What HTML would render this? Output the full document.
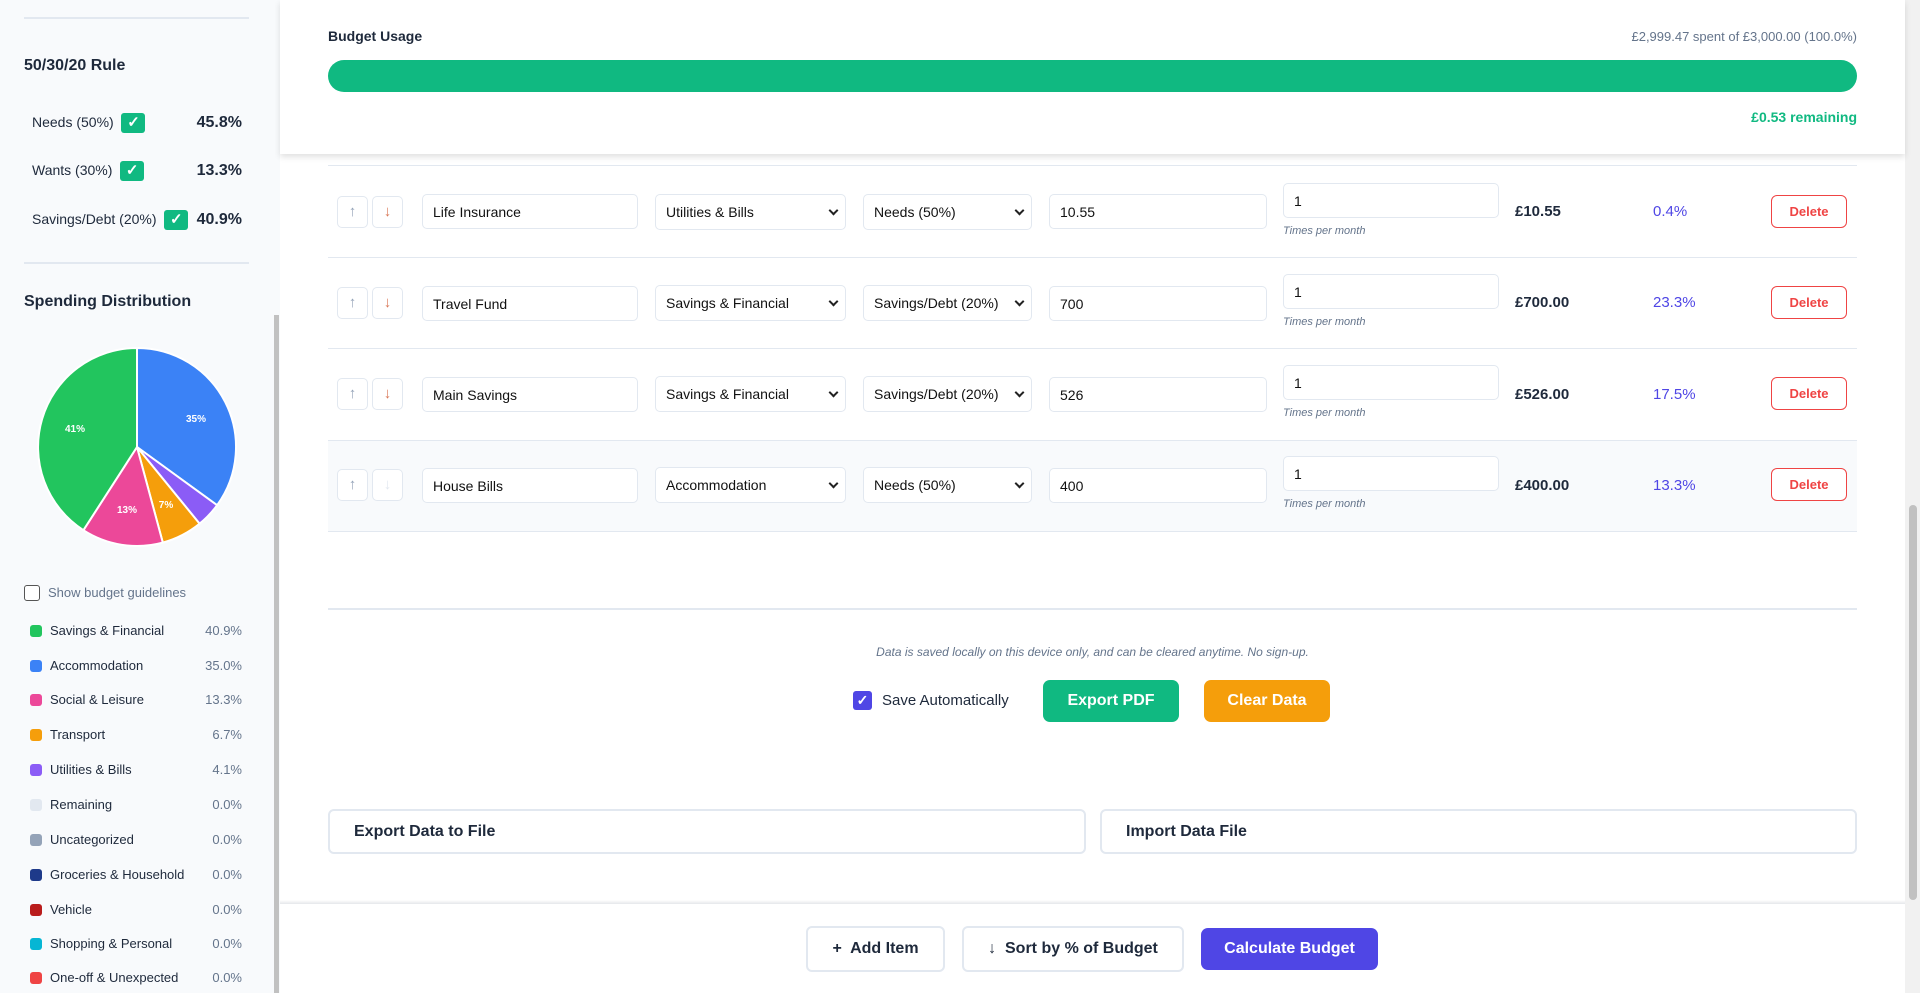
<!DOCTYPE html>
<html><head><meta charset="utf-8"><style>
*{box-sizing:border-box;margin:0;padding:0}
body{width:1920px;height:993px;overflow:hidden;font-family:"Liberation Sans",sans-serif;background:#fff;position:relative;color:#1e293b}
.a{position:absolute}
#side{left:0;top:0;width:280px;height:993px;background:#f8fafc}
.hr{height:2px;background:#e2e8f0}
.rule{font-size:14px;color:#1e293b}
.chk{display:inline-block;width:24px;height:20px;background:#10b981;border-radius:3px;color:#fff;font-size:15px;text-align:center;line-height:20px;font-weight:bold}
.pv{font-size:16px;font-weight:bold;right:38px}
.lg{left:30px;font-size:13px;height:16px;line-height:16px}
.lg i{position:absolute;left:0;top:2px;width:12px;height:12px;border-radius:3px}
.lg span{position:absolute;left:20px;white-space:nowrap}
.lg b{position:absolute;left:150px;width:62px;text-align:right;font-weight:normal;color:#64748b}
.inp{border:1px solid #e2e8f0;border-radius:5px;background:#fff;font-size:14px;color:#111;padding-left:10px;display:flex;align-items:center}
.sel{justify-content:space-between;padding-right:8px}
.sel:after{content:"";width:5px;height:5px;border-right:2px solid #222;border-bottom:2px solid #222;transform:rotate(45deg);margin-top:-4px}
.arr{border:1px solid #e2e8f0;border-radius:5px;background:#fff;width:31px;height:32px;text-align:center;line-height:30px;font-size:15px;color:#94a3b8}
.dn{color:#d97757}
.tpm{font-size:11px;font-style:italic;color:#64748b}
.amt{font-size:15px;font-weight:bold;color:#1e293b}
.pct{font-size:15px;color:#4f46e5}
.del{width:76px;height:33px;border:1px solid #ef4444;border-radius:6px;color:#ef4444;font-size:13px;font-weight:bold;text-align:center;line-height:31px;background:#fff}
.btn{border-radius:7px;color:#fff;font-weight:bold;font-size:16px;text-align:center}
.wb{border:2px solid #e2e8f0;border-radius:6px;background:#fff;font-weight:bold;font-size:16px;color:#1e293b}
</style></head><body>
<div id="side" class="a">
 <div class="a hr" style="left:24px;top:17px;width:225px"></div>
 <div class="a" style="left:24px;top:57px;font-size:16px;font-weight:600">50/30/20 Rule</div>
 <div class="a rule" style="left:32px;top:113px">Needs (50%) &nbsp;<span class="chk">✓</span></div>
 <div class="a pv" style="top:114px">45.8%</div>
 <div class="a rule" style="left:32px;top:161px">Wants (30%) &nbsp;<span class="chk">✓</span></div>
 <div class="a pv" style="top:162px">13.3%</div>
 <div class="a rule" style="left:32px;top:210px">Savings/Debt (20%) &nbsp;<span class="chk">✓</span></div>
 <div class="a pv" style="top:211px">40.9%</div>
 <div class="a hr" style="left:24px;top:262px;width:225px"></div>
 <div class="a" style="left:24px;top:293px;font-size:16px;font-weight:600">Spending Distribution</div>
 <svg class="a" style="left:0;top:0" width="280" height="580">
  <g stroke="#fff" stroke-width="2">
  <path d="M137 447 L137 348 A99 99 0 0 1 217.1 505.2Z" fill="#3b82f6"/>
  <path d="M137 447 L217.1 505.2 A99 99 0 0 1 199.6 523.7Z" fill="#8b5cf6"/>
  <path d="M137 447 L199.6 523.7 A99 99 0 0 1 162.8 542.6Z" fill="#f59e0b"/>
  <path d="M137 447 L162.8 542.6 A99 99 0 0 1 83.4 530.2Z" fill="#ec4899"/>
  <path d="M137 447 L83.4 530.2 A99 99 0 0 1 137 348Z" fill="#22c55e"/>
  </g>
  <g fill="#fff" font-size="10" font-weight="bold" font-family="Liberation Sans" text-anchor="middle">
  <text x="196" y="422">35%</text><text x="75" y="432">41%</text><text x="127" y="513">13%</text><text x="166" y="508">7%</text></g>
 </svg>
 <div class="a" style="left:24px;top:585px;width:16px;height:16px;border:1.5px solid #555;border-radius:3px;background:#fff"></div>
 <div class="a" style="left:48px;top:585px;font-size:13px;color:#64748b">Show budget guidelines</div>
 <div class="a lg" style="top:623px"><i style="background:#22c55e"></i><span>Savings &amp; Financial</span><b>40.9%</b></div>
 <div class="a lg" style="top:658px"><i style="background:#3b82f6"></i><span>Accommodation</span><b>35.0%</b></div>
 <div class="a lg" style="top:692px"><i style="background:#ec4899"></i><span>Social &amp; Leisure</span><b>13.3%</b></div>
 <div class="a lg" style="top:727px"><i style="background:#f59e0b"></i><span>Transport</span><b>6.7%</b></div>
 <div class="a lg" style="top:762px"><i style="background:#8b5cf6"></i><span>Utilities &amp; Bills</span><b>4.1%</b></div>
 <div class="a lg" style="top:797px"><i style="background:#e2e8f0"></i><span>Remaining</span><b>0.0%</b></div>
 <div class="a lg" style="top:832px"><i style="background:#94a3b8"></i><span>Uncategorized</span><b>0.0%</b></div>
 <div class="a lg" style="top:867px"><i style="background:#1e3a8a"></i><span>Groceries &amp; Household</span><b>0.0%</b></div>
 <div class="a lg" style="top:902px"><i style="background:#b91c1c"></i><span>Vehicle</span><b>0.0%</b></div>
 <div class="a lg" style="top:936px"><i style="background:#06b6d4"></i><span>Shopping &amp; Personal</span><b>0.0%</b></div>
 <div class="a lg" style="top:970px"><i style="background:#ef4444"></i><span>One-off &amp; Unexpected</span><b>0.0%</b></div>
 <div class="a" style="left:274px;top:315px;width:5px;height:678px;background:#c1c1c1"></div>
</div>

<div class="a" style="left:1905px;top:0;width:15px;height:993px;background:#f1f1f1"></div>
<div class="a" style="left:1909px;top:505px;width:8px;height:395px;background:#c1c1c1;border-radius:4px"></div>

<div class="a" style="left:280px;top:0;width:1625px;height:154px;background:#fff;box-shadow:0 3px 6px rgba(0,0,0,.12)"></div>
<div class="a" style="left:328px;top:28px;font-size:14px;font-weight:600">Budget Usage</div>
<div class="a" style="right:63px;top:29px;font-size:13px;color:#64748b">£2,999.47 spent of £3,000.00 (100.0%)</div>
<div class="a" style="left:328px;top:60px;width:1529px;height:32px;background:#10b981;border-radius:16px"></div>
<div class="a" style="right:63px;top:109px;font-size:14px;font-weight:600;color:#10b981">£0.53 remaining</div>
<div class="a" style="left:328px;top:165px;width:1529px;height:1px;background:#e2e8f0"></div>

<div class="a" style="left:328px;top:440px;width:1529px;height:91px;background:#f8fafc"></div>
<div class="a" style="left:328px;top:257px;width:1529px;height:1px;background:#e2e8f0"></div>
<div class="a" style="left:328px;top:348px;width:1529px;height:1px;background:#e2e8f0"></div>
<div class="a" style="left:328px;top:440px;width:1529px;height:1px;background:#e2e8f0"></div>
<div class="a" style="left:328px;top:531px;width:1529px;height:1px;background:#e2e8f0"></div>

<div class="a arr" style="left:337px;top:196px">↑</div><div class="a arr dn" style="left:372px;top:196px">↓</div>
<div class="a inp" style="left:422px;top:194px;width:216px;height:35px">Life Insurance</div>
<div class="a inp sel" style="left:655px;top:194px;width:191px;height:36px">Utilities &amp; Bills</div>
<div class="a inp sel" style="left:863px;top:194px;width:169px;height:36px">Needs (50%)</div>
<div class="a inp" style="left:1049px;top:194px;width:218px;height:35px">10.55</div>
<div class="a inp" style="left:1283px;top:183px;width:216px;height:35px">1</div>
<div class="a tpm" style="left:1283px;top:225px">Times per month</div>
<div class="a amt" style="left:1515px;top:203px">£10.55</div>
<div class="a pct" style="left:1653px;top:203px">0.4%</div>
<div class="a del" style="left:1771px;top:195px">Delete</div>

<div class="a arr" style="left:337px;top:287px">↑</div><div class="a arr dn" style="left:372px;top:287px">↓</div>
<div class="a inp" style="left:422px;top:286px;width:216px;height:35px">Travel Fund</div>
<div class="a inp sel" style="left:655px;top:285px;width:191px;height:36px">Savings &amp; Financial</div>
<div class="a inp sel" style="left:863px;top:285px;width:169px;height:36px">Savings/Debt (20%)</div>
<div class="a inp" style="left:1049px;top:286px;width:218px;height:35px">700</div>
<div class="a inp" style="left:1283px;top:274px;width:216px;height:35px">1</div>
<div class="a tpm" style="left:1283px;top:316px">Times per month</div>
<div class="a amt" style="left:1515px;top:294px">£700.00</div>
<div class="a pct" style="left:1653px;top:294px">23.3%</div>
<div class="a del" style="left:1771px;top:286px">Delete</div>

<div class="a arr" style="left:337px;top:378px">↑</div><div class="a arr dn" style="left:372px;top:378px">↓</div>
<div class="a inp" style="left:422px;top:377px;width:216px;height:35px">Main Savings</div>
<div class="a inp sel" style="left:655px;top:376px;width:191px;height:36px">Savings &amp; Financial</div>
<div class="a inp sel" style="left:863px;top:376px;width:169px;height:36px">Savings/Debt (20%)</div>
<div class="a inp" style="left:1049px;top:377px;width:218px;height:35px">526</div>
<div class="a inp" style="left:1283px;top:365px;width:216px;height:35px">1</div>
<div class="a tpm" style="left:1283px;top:407px">Times per month</div>
<div class="a amt" style="left:1515px;top:386px">£526.00</div>
<div class="a pct" style="left:1653px;top:386px">17.5%</div>
<div class="a del" style="left:1771px;top:377px">Delete</div>

<div class="a arr" style="left:337px;top:469px">↑</div><div class="a arr" style="left:372px;top:469px;color:#e2e8f0">↓</div>
<div class="a inp" style="left:422px;top:468px;width:216px;height:35px">House Bills</div>
<div class="a inp sel" style="left:655px;top:467px;width:191px;height:36px">Accommodation</div>
<div class="a inp sel" style="left:863px;top:467px;width:169px;height:36px">Needs (50%)</div>
<div class="a inp" style="left:1049px;top:468px;width:218px;height:35px">400</div>
<div class="a inp" style="left:1283px;top:456px;width:216px;height:35px">1</div>
<div class="a tpm" style="left:1283px;top:498px">Times per month</div>
<div class="a amt" style="left:1515px;top:477px">£400.00</div>
<div class="a pct" style="left:1653px;top:477px">13.3%</div>
<div class="a del" style="left:1771px;top:468px">Delete</div>

<div class="a" style="left:328px;top:608px;width:1529px;height:2px;background:#e2e8f0"></div>
<div class="a" style="left:328px;top:645px;width:1529px;text-align:center;font-size:12px;font-style:italic;color:#64748b">Data is saved locally on this device only, and can be cleared anytime. No sign-up.</div>
<div class="a" style="left:853px;top:691px;width:19px;height:19px;background:#4f46e5;border-radius:3px;color:#fff;font-size:14px;font-weight:bold;text-align:center;line-height:19px">✓</div>
<div class="a" style="left:882px;top:692px;font-size:15px;color:#1e293b">Save Automatically</div>
<div class="a btn" style="left:1043px;top:680px;width:136px;height:42px;background:#10b981;line-height:42px">Export PDF</div>
<div class="a btn" style="left:1204px;top:680px;width:126px;height:42px;background:#f59e0b;line-height:42px">Clear Data</div>

<div class="a wb" style="left:328px;top:809px;width:758px;height:45px;line-height:41px;padding-left:24px">Export Data to File</div>
<div class="a wb" style="left:1100px;top:809px;width:757px;height:45px;line-height:41px;padding-left:24px">Import Data File</div>

<div class="a" style="left:280px;top:900px;width:1625px;height:4px;background:linear-gradient(#fff,#e5e7eb)"></div>
<div class="a wb" style="left:806px;top:926px;width:139px;height:46px;line-height:42px;text-align:center">+&nbsp; Add Item</div>
<div class="a wb" style="left:962px;top:926px;width:222px;height:46px;line-height:42px;text-align:center">↓&nbsp; Sort by % of Budget</div>
<div class="a btn" style="left:1201px;top:928px;width:177px;height:42px;background:#4f46e5;line-height:42px">Calculate Budget</div>
</body></html>
